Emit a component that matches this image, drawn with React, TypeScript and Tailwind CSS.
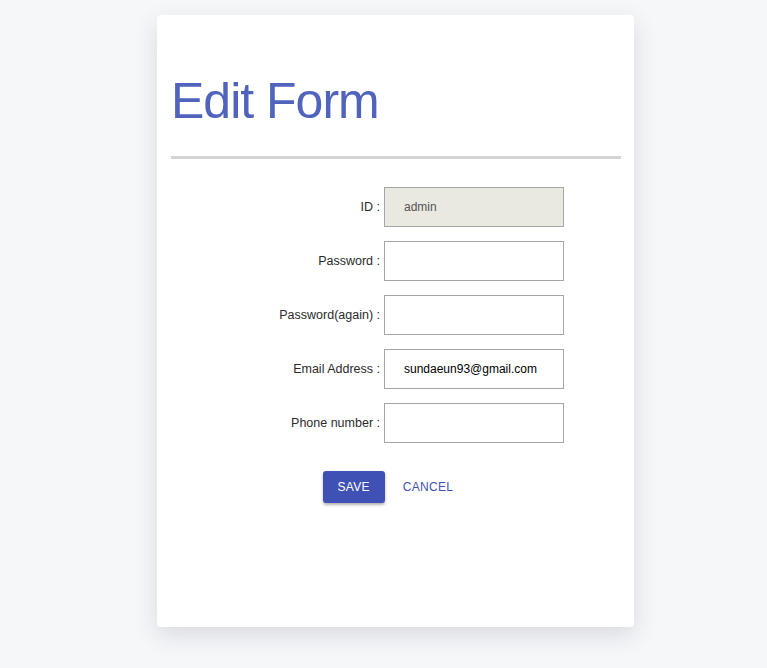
const fields = [
  { label: 'ID :', value: 'admin', disabled: true },
  { label: 'Password :', value: '', type: 'password' },
  { label: 'Password(again) :', value: '', type: 'password' },
  { label: 'Email Address :', value: 'sundaeun93@gmail.com' },
  { label: 'Phone number :', value: '' },
]

export default function App() {
  return (
    <div className="min-h-[668px] bg-[#f6f7f9] pt-[15px] font-['Liberation_Sans',Arial,sans-serif]">
      <div className="w-[477px] h-[612px] ml-[157px] rounded bg-white px-[14px] pt-[61px] shadow-[0_8px_24px_rgba(40,45,70,0.14)]">
        <h1 className="text-[50px] leading-none tracking-[-1px] text-[#5064bd]">Edit Form</h1>
        <div className="mt-[30px] h-[3px] w-[450px] bg-[#d3d3d3]" />

        <div className="mt-[28px] grid grid-cols-[209px_180px] gap-x-[4px] gap-y-[14px]">
          {fields.map((f) => (
            <div key={f.label} className="contents">
              <label className="flex items-center justify-end text-[12.5px] text-[#2b2b2b]">{f.label}</label>
              <input
                type={f.type ?? 'text'}
                defaultValue={f.value}
                disabled={f.disabled}
                className={`h-[40px] w-[180px] border border-[#a6a6a6] pl-[19px] text-[12px] outline-none ${
                  f.disabled ? 'bg-[#e9e8e1] text-[#555]' : 'bg-white text-black'
                }`}
              />
            </div>
          ))}
        </div>

        <div className="mt-[28px] flex justify-center gap-[10px] pr-[7px]">
          <button className="h-[32px] w-[62px] rounded-[3px] bg-[#3f51b5] text-[12px] tracking-[0.34px] text-white shadow-[0_2px_3px_rgba(0,0,0,0.3)]">
            SAVE
          </button>
          <button className="h-[32px] px-[8px] text-[12px] tracking-[0.34px] text-[#3f51b5]">CANCEL</button>
        </div>
      </div>
    </div>
  )
}
